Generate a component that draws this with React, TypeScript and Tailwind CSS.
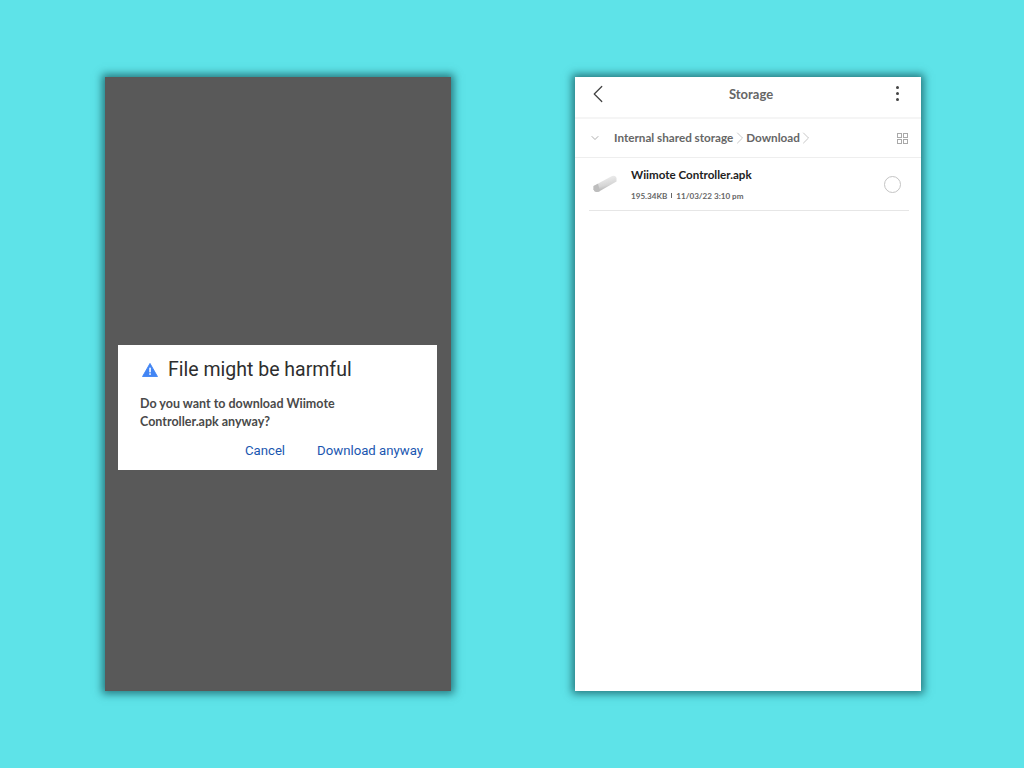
import { ChevronDown, ChevronLeft, ChevronRight } from 'lucide-react';

function WarningIcon() {
  return (
    <svg width="16" height="14" viewBox="0 0 17 15">
      <path d="M8.5 0.5 L16.5 14.5 L0.5 14.5 Z" fill="#4285f4" stroke="#4285f4" strokeLinejoin="round" />
      <rect x="7.7" y="5" width="1.7" height="5" fill="#fff" />
      <rect x="7.7" y="11" width="1.7" height="1.7" fill="#fff" />
    </svg>
  );
}

function UsbIcon() {
  return (
    <svg width="24" height="18" viewBox="0 0 24 18">
      <defs>
        <linearGradient id="stick" x1="0.3" y1="0" x2="0.6" y2="1">
          <stop offset="0" stopColor="#f2f2f2" />
          <stop offset="0.6" stopColor="#d6d6d6" />
          <stop offset="1" stopColor="#a6a6a6" />
        </linearGradient>
      </defs>
      <path d="M0.5 11 L19 1 Q23 0 23.5 3.5 L23.5 6.5 L6 16.5 Q1.5 18 0.5 14.5 Z" fill="url(#stick)" />
      <path d="M0.5 11 L5 8.7 L7 15.9 L6 16.5 Q1.5 18 0.5 14.5 Z" fill="#bdbdbd" />
    </svg>
  );
}

function GridIcon() {
  return (
    <svg width="11" height="11" viewBox="0 0 11 11" fill="none" stroke="#a9a9a9" strokeWidth="1">
      <rect x="0.5" y="0.5" width="4" height="4" />
      <rect x="6.5" y="0.5" width="4" height="4" />
      <rect x="0.5" y="6.5" width="4" height="4" />
      <rect x="6.5" y="6.5" width="4" height="4" />
    </svg>
  );
}

export default function App() {
  return (
    <div className="h-[768px] w-[1024px] overflow-hidden bg-[#5ee3e8] pl-[105px] pt-[77px] flex gap-[124px] font-['Lato',sans-serif]">
      {/* left phone */}
      <div className="w-[346px] h-[614px] bg-[#595959] shadow-[0_0_8px_3px_rgba(20,90,95,0.75)] pl-[13px] pr-[14px] pt-[268px]">
        <div className="h-[125px] bg-white pl-[22px] pr-[14px] pt-[13px]">
          <div className="flex items-center gap-[10px] h-[24px] pl-[2px]">
            <WarningIcon />
            <span className="font-['Roboto',sans-serif] text-[19.5px] leading-[24px] text-[#2e2e2e]">File might be harmful</span>
          </div>
          <p className="mt-[13px] text-[12.5px] leading-[18px] font-bold text-[#4a4a4a] w-[240px]">
            Do you want to download Wiimote Controller.apk anyway?
          </p>
          <div className="mt-[11px] flex justify-end gap-[32px] text-[13.2px] leading-[18px] font-['Roboto',sans-serif] text-[#1a56b0]">
            <span>Cancel</span>
            <span>Download anyway</span>
          </div>
        </div>
      </div>

      {/* right phone */}
      <div className="w-[346px] h-[614px] bg-white shadow-[0_0_8px_3px_rgba(20,90,95,0.75)]">
        <div className="h-[42px] flex items-center justify-between pl-[8px] pr-[22px] pb-[5px] border-b-2 border-[#f5f5f5]">
          <ChevronLeft size={30} strokeWidth={1} color="#444" className="-translate-y-px" />
          <span className="text-[13px] font-bold text-[#666] mr-[7px]">Storage</span>
          <div className="flex flex-col gap-[3px] -translate-y-px">
            <span className="w-[3px] h-[3px] rounded-full bg-[#444]" />
            <span className="w-[3px] h-[3px] rounded-full bg-[#444]" />
            <span className="w-[3px] h-[3px] rounded-full bg-[#444]" />
          </div>
        </div>
        <div className="h-[39px] flex items-center pl-[14px] pr-[13px] border-b border-[#eeeeee]">
          <ChevronDown size={12} strokeWidth={1.2} color="#777" />
          <span className="ml-[13px] text-[11.7px] font-bold text-[#666]">Internal shared storage</span>
          <ChevronRight size={20} strokeWidth={0.8} color="#aaa" className="-mx-[3.5px]" />
          <span className="text-[11.7px] font-bold text-[#666]">Download</span>
          <ChevronRight size={20} strokeWidth={0.8} color="#aaa" className="-mx-[3.5px]" />
          <div className="ml-auto">
            <GridIcon />
          </div>
        </div>
        <div className="ml-[14px] mr-[12px] h-[53px] flex items-center border-b border-[#e6e6e6] pl-[4px] pr-[8px]">
          <UsbIcon />
          <div className="ml-[14px] flex-1">
            <div className="text-[11.6px] leading-[16px] font-bold text-[#222]">Wiimote Controller.apk</div>
            <div className="mt-[7px] flex items-center gap-[4px] text-[8.1px] leading-[12px] font-bold text-[#666]">
              <span>195.34KB</span>
              <span className="w-px h-[5px] bg-[#666]" />
              <span>11/03/22 3:10 pm</span>
            </div>
          </div>
          <span className="w-[17px] h-[17px] rounded-full border border-[#c4c4c4]" />
        </div>
      </div>
    </div>
  );
}
